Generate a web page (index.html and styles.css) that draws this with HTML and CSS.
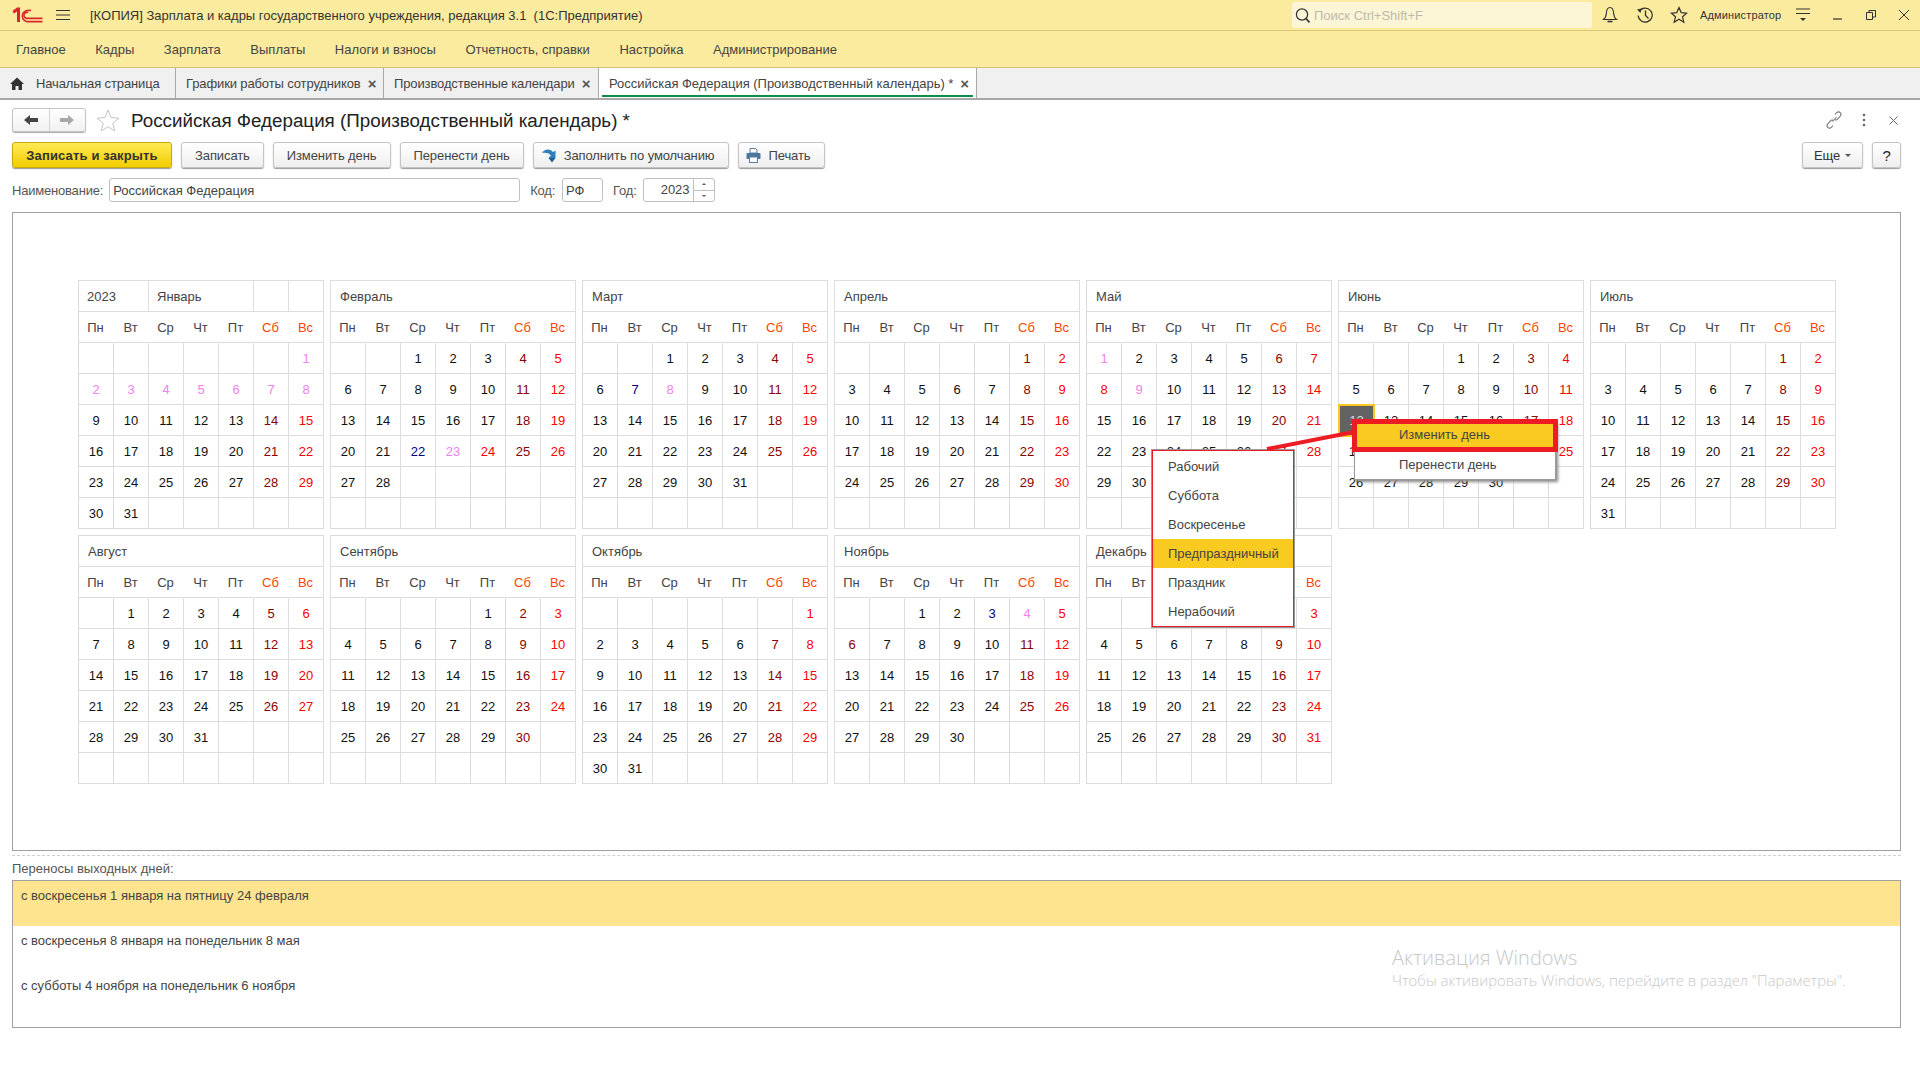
FILE: index.html
```html
<!DOCTYPE html>
<html lang="ru">
<head>
    <meta charset="UTF-8">
    <title>Российская Федерация (Производственный календарь)</title>
    <link rel="stylesheet" href="styles.css">
</head>
<body>
    <!-- Title bar -->
    <header class="titlebar">
        <svg class="logo" width="31" height="16" viewBox="0 0 31 16">
            <path d="M0.5 4 L5 0.5 H8 V15 H5 V4.5 L2 6.5 Z" fill="#d9252b"/>
            <path d="M19 3.6 A6.2 5.6 0 1 0 14.5 14.6 H30.5" fill="none" stroke="#d9252b" stroke-width="1.6"/>
            <path d="M16.4 5.4 A3.4 3 0 1 0 14.5 11.4 H30.5" fill="none" stroke="#d9252b" stroke-width="1.6"/>
        </svg>
        <svg class="burger" width="14" height="12" viewBox="0 0 14 12">
            <path d="M0 1.5H14M0 6H14M0 10.5H14" stroke="#333" stroke-width="1.2"/>
        </svg>
        <div class="app-title">[КОПИЯ] Зарплата и кадры государственного учреждения, редакция 3.1&nbsp; (1С:Предприятие)</div>
        <div class="search">
            <svg width="16" height="17" viewBox="0 0 16 17">
                <circle cx="7" cy="7.5" r="5.6" fill="none" stroke="#333" stroke-width="1.3"/>
                <path d="M11 11.5L14.5 15.5" stroke="#333" stroke-width="1.8"/>
            </svg>
            <span>Поиск Ctrl+Shift+F</span>
        </div>
        <div class="top-icons">
            <svg class="ti-bell" width="16" height="18" viewBox="0 0 16 18">
                <path d="M8 1.5C5 1.5 4.6 4 4.4 7C4.2 10 3.6 12 1.5 13.5H14.5C12.4 12 11.8 10 11.6 7C11.4 4 11 1.5 8 1.5Z" fill="none" stroke="#333" stroke-width="1.1"/>
                <path d="M5.5 15.5H10.5" stroke="#333" stroke-width="1.6"/>
            </svg>
            <svg class="ti-hist" width="18" height="18" viewBox="0 0 18 18">
                <path d="M3.2 5.5A7 7 0 1 1 2.2 9.5" fill="none" stroke="#333" stroke-width="1.2"/>
                <path d="M1 3.5L5.5 2.5L4.5 7Z" fill="#333"/>
                <path d="M9.5 4.5V9.5L12.5 12.5" fill="none" stroke="#333" stroke-width="1.3"/>
            </svg>
            <svg class="ti-star" width="18" height="18" viewBox="0 0 18 18">
                <path d="M9 1.5L11.2 6.6L16.6 7.1L12.5 10.7L13.8 16.2L9 13.3L4.2 16.2L5.5 10.7L1.4 7.1L6.8 6.6Z" fill="none" stroke="#333" stroke-width="1.2"/>
            </svg>
            <span class="user">Администратор</span>
            <svg class="ti-menu" width="14" height="14" viewBox="0 0 14 14">
                <path d="M0 1H14M0 5.5H14" stroke="#333" stroke-width="1.1"/>
                <path d="M4 10H10L7 13Z" fill="#333"/>
            </svg>
            <svg class="ti-min" width="10" height="10" viewBox="0 0 10 10">
                <path d="M0 9H9" stroke="#333" stroke-width="1.2"/>
            </svg>
            <svg class="ti-max" width="10" height="10" viewBox="0 0 10 10">
                <path d="M0.5 2.5H6.5V9.5H0.5ZM3 2.5V0.5H9.5V7H6.5" fill="none" stroke="#333" stroke-width="1"/>
            </svg>
            <svg class="ti-close" width="12" height="12" viewBox="0 0 12 12">
                <path d="M1 1L11 11M11 1L1 11" stroke="#333" stroke-width="1"/>
            </svg>
        </div>
    </header>

    <!-- Sections -->
    <nav class="menu">
        <a>Главное</a>
        <a>Кадры</a>
        <a>Зарплата</a>
        <a>Выплаты</a>
        <a>Налоги и взносы</a>
        <a>Отчетность, справки</a>
        <a>Настройка</a>
        <a>Администрирование</a>
    </nav>

    <!-- Open windows -->
    <div class="tabs">
        <div class="tab tab-home">
            <svg width="14" height="13" viewBox="0 0 14 13">
                <path d="M7 0.5L14 7H12V13H8.5V9H5.5V13H2V7H0Z" fill="#333"/>
            </svg>
            <span>Начальная страница</span>
        </div>
        <div class="tab tab-schedules"><span>Графики работы сотрудников</span><b>×</b></div>
        <div class="tab tab-calendars"><span>Производственные календари</span><b>×</b></div>
        <div class="tab tab-active"><span>Российская Федерация (Производственный календарь) *</span><b>×</b></div>
    </div>

    <main class="page">
        <div class="form-head">
            <div class="nav-buttons">
                <button class="nav-btn">
                    <svg width="14" height="10" viewBox="0 0 14 10"><path d="M0 5L6 0V3H14V7H6V10Z" fill="#444"/></svg>
                </button>
                <button class="nav-btn">
                    <svg width="14" height="10" viewBox="0 0 14 10"><path d="M14 5L8 0V3H0V7H8V10Z" fill="#a8a8a8"/></svg>
                </button>
            </div>
            <svg class="fav" width="24" height="23" viewBox="0 0 24 23">
                <path d="M12 1L15 8.6L23 9.2L16.8 14.3L18.8 22L12 17.8L5.2 22L7.2 14.3L1 9.2L9 8.6Z" fill="#fff" stroke="#c4c4c4"/>
            </svg>
            <h1>Российская Федерация (Производственный календарь) *</h1>
            <div class="form-icons">
                <svg width="16" height="18" viewBox="0 0 16 18">
                    <path d="M6.5 10.5L10.5 6M9 3.5L10.7 1.6C11.7 0.6 13.3 0.6 14.2 1.6C15.2 2.6 15.1 4.1 14.2 5.1L11.5 8.2C10.8 9 9.8 9.1 9 8.7M7 14.5L5.3 16.4C4.3 17.4 2.7 17.4 1.8 16.4C0.8 15.4 0.9 13.9 1.8 12.9L4.5 9.8C5.2 9 6.2 8.9 7 9.3" fill="none" stroke="#777" stroke-width="1.1"/>
                </svg>
                <svg width="4" height="14" viewBox="0 0 4 14">
                    <circle cx="2" cy="2" r="1.3" fill="#666"/><circle cx="2" cy="7" r="1.3" fill="#666"/><circle cx="2" cy="12" r="1.3" fill="#666"/>
                </svg>
                <svg class="form-close" width="9" height="9" viewBox="0 0 9 9"><path d="M0.5 0.5L8.5 8.5M8.5 0.5L0.5 8.5" stroke="#666"/></svg>
            </div>
        </div>

        <div class="toolbar">
            <button class="btn btn-primary">Записать и закрыть</button>
            <button class="btn">Записать</button>
            <button class="btn">Изменить день</button>
            <button class="btn">Перенести день</button>
            <button class="btn btn-icon">
                <svg width="16" height="15" viewBox="0 0 16 15">
                    <path d="M1 5C3 1 9 0 12 4L14.5 2.5V10H7.5L10 7.5C8 5 4.5 4.5 1 5Z" fill="#2c7fc0"/>
                    <path d="M7.5 10H14.5L11 14.5Z" fill="#1f5f96"/>
                </svg>
                Заполнить по умолчанию
            </button>
            <button class="btn btn-icon">
                <svg width="15" height="15" viewBox="0 0 15 15">
                    <path d="M4 0.5H9.5L11 2V5H4Z" fill="#fff" stroke="#5c7d9c"/>
                    <rect x="0.5" y="5" width="14" height="6" rx="1" fill="#4a779f"/>
                    <rect x="3.5" y="9" width="8" height="5.5" fill="#fff" stroke="#5c7d9c"/>
                </svg>
                Печать
            </button>
            <div class="toolbar-right">
                <button class="btn btn-more">Еще <i class="caret"></i></button>
                <button class="btn btn-help">?</button>
            </div>
        </div>

        <div class="fields">
            <label>Наименование:</label>
            <input class="input input-name" type="text" value="Российская Федерация">
            <label class="lbl-code">Код:</label>
            <input class="input input-code" type="text" value="РФ">
            <label class="lbl-year">Год:</label>
            <div class="spin">
                <span class="spin-value">2023</span>
                <div class="spin-arrows">
                    <span><i class="caret caret-up"></i></span>
                    <span><i class="caret"></i></span>
                </div>
            </div>
        </div>

        <div class="calendar-frame">
            <div class="calendar" id="calendar"></div>
        </div>

        <div class="splitter"></div>
        <div class="list-label">Переносы выходных дней:</div>
        <div class="transfers">
            <div class="transfer transfer-current">с воскресенья 1 января на пятницу 24 февраля</div>
            <div class="transfer">с воскресенья 8 января на понедельник 8 мая</div>
            <div class="transfer">с субботы 4 ноября на понедельник 6 ноября</div>
        </div>
    </main>

    <!-- Context menus and callout over the calendar -->
    <svg class="callout" width="100" height="30" viewBox="0 0 100 30">
        <path d="M9 25L96 8" stroke="#ed1c24" stroke-width="4"/>
    </svg>
    <div class="popup popup-types">
        <div>Рабочий</div>
        <div>Суббота</div>
        <div>Воскресенье</div>
        <div class="hover">Предпраздничный</div>
        <div>Праздник</div>
        <div>Нерабочий</div>
    </div>
    <div class="popup popup-day">
        <div class="marked">Изменить день</div>
        <div>Перенести день</div>
    </div>

    <div class="watermark">
        <div class="wm-title">Активация Windows</div>
        <div class="wm-text">Чтобы активировать Windows, перейдите в раздел "Параметры".</div>
    </div>

    <script>
        const weekDays = ['Пн', 'Вт', 'Ср', 'Чт', 'Пт', 'Сб', 'Вс'];

        // offset = empty cells before the 1st; marks = days with their own colour
        const months = [
            { name: 'Январь', offset: 6, days: 31, marks: { 1: 'holiday', 2: 'holiday', 3: 'holiday', 4: 'holiday', 5: 'holiday', 6: 'holiday', 7: 'holiday', 8: 'holiday' } },
            { name: 'Февраль', offset: 2, days: 28, marks: { 22: 'short', 23: 'holiday', 24: 'sun' } },
            { name: 'Март', offset: 2, days: 31, marks: { 7: 'short', 8: 'holiday' } },
            { name: 'Апрель', offset: 5, days: 30, marks: {} },
            { name: 'Май', offset: 0, days: 31, marks: { 1: 'holiday', 8: 'sun', 9: 'holiday' } },
            { name: 'Июнь', offset: 3, days: 30, marks: { 12: 'selected' } },
            { name: 'Июль', offset: 5, days: 31, marks: {} },
            { name: 'Август', offset: 1, days: 31, marks: {} },
            { name: 'Сентябрь', offset: 4, days: 30, marks: {} },
            { name: 'Октябрь', offset: 6, days: 31, marks: {} },
            { name: 'Ноябрь', offset: 2, days: 30, marks: { 3: 'short', 4: 'holiday', 6: 'sat' } },
            { name: 'Декабрь', offset: 4, days: 31, marks: {} }
        ];

        function monthHead(month, index) {
            if (index === 0) {
                return `
                    <div class="cell head span-2">2023</div>
                    <div class="cell head span-3">${month.name}</div>
                    <div class="cell head"></div>
                    <div class="cell head"></div>`;
            }
            return `<div class="cell head span-7">${month.name}</div>`;
        }

        function dayCell(month, slot) {
            const day = slot - month.offset + 1;
            if (day < 1 || day > month.days) {
                return '<div class="cell"></div>';
            }
            let kind = month.marks[day];
            if (!kind && slot % 7 === 5) kind = 'sat';
            if (!kind && slot % 7 === 6) kind = 'sun';
            return `<div class="cell ${kind || ''}">${day}</div>`;
        }

        document.getElementById('calendar').innerHTML = months.map((month, index) => {
            let html = monthHead(month, index);
            weekDays.forEach((name, i) => {
                html += `<div class="cell week ${i > 4 ? 'week-off' : ''}">${name}</div>`;
            });
            for (let slot = 0; slot < 42; slot++) {
                html += dayCell(month, slot);
            }
            return `<div class="month">${html}</div>`;
        }).join('');
    </script>
</body>
</html>
```

FILE: styles.css
```css
* {
    margin: 0;
    padding: 0;
    box-sizing: border-box;
}

html, body {
    width: 1920px;
    height: 1080px;
    overflow: hidden;
}

body {
    position: relative;
    background-color: #fff;
    color: #444;
    font-family: "Liberation Sans", Arial, sans-serif;
    font-size: 13px;
}

/* Title bar */
.titlebar {
    display: flex;
    align-items: center;
    height: 31px;
    background-color: #fbeb9e;
    border-bottom: 1px solid #d8c878;
    color: #333;
}

.logo {
    margin-left: 12px;
}

.burger {
    margin-left: 13px;
}

.app-title {
    margin-left: 20px;
    white-space: nowrap;
}

.search {
    display: flex;
    align-items: center;
    gap: 3px;
    width: 300px;
    height: 26px;
    margin-left: auto;
    padding-left: 3px;
    background-color: #fdf6d6;
    border-radius: 3px;
    color: #bdb9ac;
}

.top-icons {
    display: flex;
    flex-shrink: 0;
    align-items: center;
    width: 328px;
}

.top-icons svg {
    flex-shrink: 0;
}

.ti-bell { margin-left: 10px; }
.ti-hist { margin-left: 18px; }
.ti-star { margin-left: 16px; }
.user { margin-left: 12px; font-size: 11px; letter-spacing: 0.15px; white-space: nowrap; }
.ti-menu { margin-left: 15px; }
.ti-min { margin-left: 23px; }
.ti-max { margin-left: 23px; }
.ti-close { margin-left: 22px; }

/* Sections */
.menu {
    display: flex;
    align-items: center;
    gap: 29.6px;
    height: 37px;
    padding-left: 16px;
    background-color: #fbeb9e;
    border-bottom: 1px solid #cfc27f;
    color: #444;
}

/* Open windows */
.tabs {
    display: flex;
    height: 32px;
    background-color: #f0f0f0;
    border-bottom: 2px solid #a8a8a8;
}

.tab {
    position: relative;
    display: flex;
    align-items: center;
    border-right: 1px solid #a8a8a8;
    white-space: nowrap;
}

.tab span {
    letter-spacing: -0.12px;
}

.tab b {
    margin-left: 7px;
    color: #555;
    font-size: 15px;
}

.tab-home {
    width: 176px;
    gap: 12px;
    padding-left: 10px;
}

.tab-schedules {
    width: 208px;
    padding-left: 10px;
}

.tab-calendars {
    width: 215px;
    padding-left: 10px;
}

.tab-active {
    width: 378px;
    height: 30px;
    padding-left: 10px;
    background-color: #fff;
}

.tab-active span {
    letter-spacing: -0.02px;
}

.tab-active::after {
    content: "";
    position: absolute;
    left: 3px;
    right: 3px;
    bottom: 1px;
    height: 2px;
    background-color: #0d8c45;
}

/* Form */
.page {
    display: flex;
    flex-direction: column;
    padding: 0 19px 0 12px;
}

.form-head {
    display: flex;
    align-items: center;
    height: 24px;
    margin-top: 8px;
}

.nav-buttons {
    display: flex;
    width: 74px;
    height: 24px;
    background: linear-gradient(#fff, #f1f1f1);
    border: 1px solid #c4c4c4;
    border-radius: 3px;
    box-shadow: 0 1px 1px #aaa;
}

.nav-btn {
    display: flex;
    flex: 1;
    align-items: center;
    justify-content: center;
    background: none;
    border: none;
}

.nav-btn + .nav-btn {
    border-left: 1px solid #d4d4d4;
}

.fav {
    margin-left: 10px;
}

h1 {
    margin-left: 11px;
    padding-top: 2px;
    color: #222;
    font-size: 18.8px;
    font-weight: normal;
    white-space: nowrap;
}

.form-icons {
    display: flex;
    align-items: center;
    margin-left: auto;
    margin-right: 3px;
    gap: 20px;
}

.form-close {
    margin-left: 3px;
}

.toolbar {
    display: flex;
    gap: 9px;
    height: 26px;
    margin-top: 10px;
}

.btn {
    display: flex;
    align-items: center;
    justify-content: center;
    height: 26px;
    padding: 0 13px;
    background: linear-gradient(#fff, #efefef);
    border: 1px solid #c4c4c4;
    border-radius: 3px;
    box-shadow: 0 1px 1px #999;
    color: #444;
    font-family: inherit;
    font-size: 13px;
    letter-spacing: -0.1px;
    white-space: nowrap;
}

.btn-primary {
    width: 160px;
    padding: 0;
    background: linear-gradient(#ffea55, #f2cd00);
    border-color: #c8aa10;
    color: #333;
    font-weight: bold;
    letter-spacing: 0.15px;
}

.btn-icon {
    gap: 7px;
    padding: 0 14px 0 7px;
}

.toolbar-right {
    display: flex;
    gap: 9px;
    margin-left: auto;
}

.btn-more {
    gap: 5px;
    width: 61px;
    padding: 0;
    color: #333;
}

.btn-help {
    width: 29px;
    padding: 0;
    color: #222;
    font-size: 15px;
}

.caret {
    display: inline-block;
    width: 0;
    height: 0;
    border-top: 3px solid #555;
    border-left: 3px solid transparent;
    border-right: 3px solid transparent;
}

.caret-up {
    border-top: none;
    border-bottom: 3px solid #555;
}

.fields {
    display: flex;
    align-items: center;
    height: 24px;
    margin-top: 10px;
    color: #555;
}

.fields label {
    letter-spacing: -0.2px;
}

.input {
    height: 24px;
    padding: 0 3px;
    border: 1px solid #c0c0c0;
    border-radius: 3px;
    color: #444;
    font-family: inherit;
    font-size: 13px;
}

.input-name {
    width: 411px;
    margin-left: 6px;
}

.lbl-code {
    margin-left: 10px;
}

.input-code {
    width: 41px;
    margin-left: 7px;
}

.lbl-year {
    margin-left: 10px;
}

.spin {
    display: flex;
    width: 72px;
    height: 24px;
    margin-left: 6px;
    border: 1px solid #c0c0c0;
    border-radius: 3px;
    color: #444;
}

.spin-value {
    flex: 1;
    padding-right: 3px;
    line-height: 22px;
    text-align: right;
    font-size: 13px;
}

.spin-arrows {
    display: flex;
    flex-direction: column;
    width: 21px;
    border-left: 1px solid #c0c0c0;
}

.spin-arrows span {
    display: flex;
    flex: 1;
    align-items: center;
    justify-content: center;
}

.spin-arrows span + span {
    border-top: 1px solid #c0c0c0;
}

.spin-arrows .caret {
    border-width: 2px;
    border-top-color: #555;
}

.spin-arrows .caret-up {
    border-top: none;
    border-bottom-color: #555;
}

/* Calendar */
.calendar-frame {
    height: 639px;
    margin-top: 10px;
    padding: 67px 0 0 65px;
    border: 1px solid #a0a0a0;
}

.calendar {
    display: grid;
    grid-template-columns: repeat(7, 246px);
    gap: 6px;
}

.month {
    display: grid;
    grid-template-columns: repeat(7, 35px);
    grid-auto-rows: 31px;
    border-top: 1px solid #dcdcdc;
    border-left: 1px solid #dcdcdc;
}

.cell {
    display: flex;
    align-items: center;
    justify-content: center;
    border-right: 1px solid #dcdcdc;
    border-bottom: 1px solid #dcdcdc;
    color: #111;
    font-size: 13px;
}

.head {
    justify-content: flex-start;
    padding-left: 8px;
    color: #444;
}

.span-2 { grid-column: span 2; }
.span-3 { grid-column: span 3; }
.span-7 { grid-column: span 7; padding-left: 9px; }

.week {
    padding-right: 1px;
    border-right-color: transparent;
    color: #444;
}

.week:nth-last-child(43) {
    border-right-color: #dcdcdc;
}

.week-off { color: #ff4500; }
.sat { color: #8b0000; }
.sun { color: #f00; }
.holiday { color: #ee82ee; }
.short { color: #00008b; }

.selected {
    background-color: #636363;
    border: 1px solid #fff;
    outline: 2px solid #fac81e;
    outline-offset: -1px;
    color: #ddd;
}

/* Transfers list */
.splitter {
    margin-top: 4px;
    border-top: 1px dashed #d0d0d0;
}

.list-label {
    height: 24px;
    line-height: 26px;
    color: #555;
}

.transfers {
    height: 148px;
    border: 1px solid #a0a0a0;
}

.transfer {
    height: 45px;
    padding: 7px 8px;
    color: #444;
}

.transfer-current {
    background-color: #fee48f;
}

/* Over the page */
.callout {
    position: absolute;
    left: 1258px;
    top: 424px;
    z-index: 3;
}

.popup {
    position: absolute;
    z-index: 2;
    background-color: #fff;
}

.popup-types {
    left: 1152px;
    top: 450px;
    width: 142px;
    height: 177px;
    padding-top: 1px;
    border: 1px solid #ed1c24;
    outline: 1px solid #999;
}

.popup-types div {
    height: 29px;
    padding-left: 15px;
    line-height: 29px;
}

.popup-types .hover {
    background-color: #f9ca20;
}

.popup-day {
    left: 1354px;
    top: 421px;
    width: 202px;
    height: 59px;
    border: 1px solid #999;
    box-shadow: 2px 2px 3px #888;
}

.popup-day div {
    height: 29px;
    padding-left: 44px;
    line-height: 29px;
}

.popup-day .marked {
    position: absolute;
    left: -3px;
    top: -3px;
    width: 206px;
    height: 33px;
    padding-left: 42px;
    line-height: 21px;
    background-color: #f9ca20;
    border: 5px solid #ed1c24;
}

.popup-day .marked + div {
    margin-top: 28px;
}

.watermark {
    position: absolute;
    left: 1392px;
    top: 944px;
    z-index: 1;
    color: #c8c8c8;
    font-family: "Open Sans", sans-serif;
    white-space: nowrap;
}

.wm-title {
    font-size: 20px;
    font-weight: 300;
}

.wm-text {
    margin-top: -1px;
    font-size: 14.9px;
    font-weight: 300;
}
```
